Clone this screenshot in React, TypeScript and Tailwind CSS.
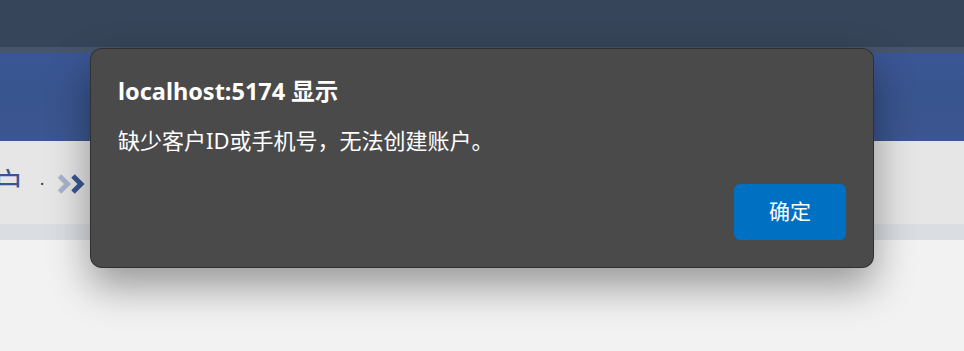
import React from 'react';

const cjk = '"Noto Sans", "Noto Sans CJK SC", sans-serif';

function Chevrons() {
  return (
    <svg width="30" height="20" viewBox="0 0 30 20" className="shrink-0">
      <path d="M2.5 2 L10.5 10 L2.5 18" fill="none" stroke="#a9b4cc" strokeWidth="5" strokeLinejoin="miter" />
      <path d="M16 2 L24 10 L16 18" fill="none" stroke="#3a5592" strokeWidth="5" strokeLinejoin="miter" />
    </svg>
  );
}

function Backdrop() {
  return (
    <div className="flex h-[351px] w-full flex-col bg-[#f2f2f2]">
      <div className="h-[47px] bg-[#37455a]" />
      <div className="h-[6px] bg-[#45556c]" />
      <div className="h-[88px] bg-gradient-to-b from-[#3a5695] via-[#39558f] to-[#3b5690]" />
      <div className="flex h-[83px] items-center bg-[#e6e6e6] pt-[2px]">
        <span className="ml-[-8px] text-[32px] leading-none text-[#3a5592]" style={{ fontFamily: cjk }}>
          户
        </span>
        <span className="ml-[16px] text-[16px] leading-none text-[#333]">·</span>
        <span className="ml-[13px] flex items-center">
          <Chevrons />
        </span>
      </div>
      <div className="h-[16px] bg-[#dadee3]" />
      <div className="flex-1 bg-[#f2f2f2]" />
    </div>
  );
}

function AlertDialog() {
  return (
    <div
      className="absolute left-[90px] top-[48px] flex h-[220px] w-[784px] flex-col rounded-[12px] border border-black/35 bg-[#4a4a4a] px-[27px] pt-[25px] text-white shadow-[0_18px_40px_rgba(0,0,0,0.38)]"
      style={{ fontFamily: cjk }}
    >
      <h1 className="text-[23.5px] font-bold leading-[34px]">localhost:5174 显示</h1>
      <p className="mt-[16px] text-[22px] leading-[32px]">缺少客户ID或手机号，无法创建账户。</p>
      <div className="mt-auto mb-[27px] flex justify-end">
        <button className="h-[56px] w-[112px] rounded-[6px] bg-[#0070c2] text-[21px] text-white">确定</button>
      </div>
    </div>
  );
}

export default function App() {
  return (
    <div className="relative h-[351px] w-full overflow-hidden">
      <Backdrop />
      <AlertDialog />
    </div>
  );
}
